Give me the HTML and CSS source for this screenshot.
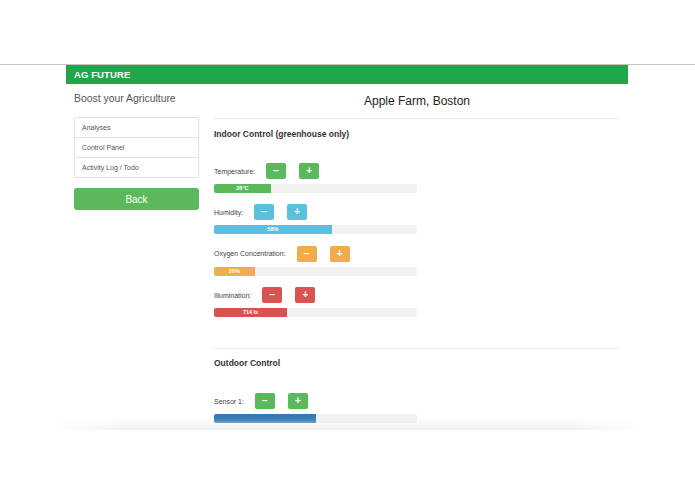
FILE: index.html
```html
<!DOCTYPE html>
<html lang="en">
<head>
    <meta charset="UTF-8">
    <meta name="viewport" content="width=device-width, initial-scale=1.0">
    <title>AG Future - Control Panel</title>
    <link rel="stylesheet" href="styles.css">
</head>
<body>
    <div class="screen">
        <div class="page">
            <div class="navbar">AG FUTURE</div>
            <div class="layout">
                <aside class="sidebar">
                    <p class="tagline">Boost your Agriculture</p>
                    <ul class="list-group">
                        <li>Analyses</li>
                        <li>Control Panel</li>
                        <li>Activity Log / Todo</li>
                    </ul>
                    <button class="back">Back</button>
                </aside>
                <main class="main">
                    <h1>Apple Farm, Boston</h1>

                    <section class="panel">
                        <h2>Indoor Control (greenhouse only)</h2>

                        <div class="control">
                            <div class="control-row">
                                <span class="label">Temperature:</span>
                                <button class="btn success">&minus;</button>
                                <button class="btn success">+</button>
                            </div>
                            <div class="progress"><div class="bar success" style="width: 28%">28°C</div></div>
                        </div>

                        <div class="control">
                            <div class="control-row">
                                <span class="label">Humidity:</span>
                                <button class="btn info">&minus;</button>
                                <button class="btn info">+</button>
                            </div>
                            <div class="progress"><div class="bar info" style="width: 58%">58%</div></div>
                        </div>

                        <div class="control">
                            <div class="control-row">
                                <span class="label">Oxygen Concentration:</span>
                                <button class="btn warning">&minus;</button>
                                <button class="btn warning">+</button>
                            </div>
                            <div class="progress"><div class="bar warning" style="width: 20%">20%</div></div>
                        </div>

                        <div class="control">
                            <div class="control-row">
                                <span class="label">Illumination:</span>
                                <button class="btn danger">&minus;</button>
                                <button class="btn danger">+</button>
                            </div>
                            <div class="progress"><div class="bar danger" style="width: 36%">714 lx</div></div>
                        </div>
                    </section>

                    <section class="panel outdoor">
                        <h2>Outdoor Control</h2>

                        <div class="control">
                            <div class="control-row">
                                <span class="label">Sensor 1:</span>
                                <button class="btn success">&minus;</button>
                                <button class="btn success">+</button>
                            </div>
                            <div class="progress"><div class="bar primary" style="width: 50%"></div></div>
                        </div>
                    </section>
                </main>
            </div>
        </div>
        <div class="fade"></div>
    </div>
</body>
</html>
```

FILE: styles.css
```css
/* General Styles */
body {
    margin: 0;
    padding: 0;
    background: #fff;
    font-family: 'Liberation Sans', Arial, sans-serif;
    color: #333;
}
.screen {
    position: relative;
    margin-top: 64px;
    height: 365px;
    border-top: 1px solid #c4c4c4;
    overflow: hidden;
}
.fade {
    position: absolute;
    left: 50px;
    right: 50px;
    bottom: 0;
    height: 12px;
    background: linear-gradient(to bottom, rgba(240, 240, 240, 0), rgba(236, 236, 236, 0.75));
    -webkit-mask-image: linear-gradient(to right, transparent, #000 12%, #000 88%, transparent);
}
.page {
    width: 562px;
    margin-left: 66px;
}

/* Header */
.navbar {
    height: 19px;
    line-height: 19px;
    padding-left: 8px;
    background: #21a64b;
    color: #fff;
    font-size: 9.5px;
    font-weight: bold;
    letter-spacing: 0.1px;
}
.layout {
    display: flex;
    padding: 0 8px;
}

/* Sidebar */
.sidebar {
    width: 125px;
}
.tagline {
    margin: 7px 0 0;
    height: 16px;
    line-height: 16px;
    font-size: 10.4px;
    color: #555;
}
.list-group {
    list-style: none;
    margin: 10px 0 0;
    padding: 0;
    border: 1px solid #e3e3e3;
    border-radius: 2px;
}
.list-group li {
    height: 19px;
    line-height: 19px;
    padding-left: 7px;
    font-size: 7px;
    color: #555;
    border-top: 1px solid #e3e3e3;
}
.list-group li:first-child {
    border-top: none;
}
.back {
    display: block;
    width: 125px;
    height: 22px;
    margin-top: 10px;
    border: none;
    border-radius: 3px;
    background: #5cb85c;
    color: #fff;
    font-family: inherit;
    font-size: 10px;
}

/* Main */
.main {
    width: 406px;
    margin-left: 15px;
}
.main h1 {
    margin: 0;
    padding-top: 9px;
    height: 25px;
    line-height: 16px;
    font-size: 12px;
    font-weight: normal;
    text-align: center;
    color: #222;
}
.panel {
    border-top: 1px solid #eee;
}
.panel h2 {
    margin: 0;
    padding-top: 9px;
    height: 35px;
    line-height: 13px;
    font-size: 8.5px;
    font-weight: bold;
    color: #333;
}
.outdoor {
    margin-top: 31px;
}
.outdoor h2 {
    padding-top: 8px;
    height: 36px;
}
.control {
    margin-bottom: 11.4px;
}
.control-row {
    display: flex;
    align-items: center;
    height: 16px;
}
.label {
    font-size: 7px;
    color: #444;
    margin-right: 11px;
}
.btn {
    width: 20px;
    height: 16px;
    padding: 0;
    margin-right: 13px;
    border: none;
    border-radius: 2px;
    color: #fff;
    font-family: inherit;
    font-size: 10px;
    font-weight: bold;
    line-height: 16px;
}
.progress {
    width: 203px;
    height: 9px;
    margin-top: 5px;
    background: #f2f2f2;
    border-radius: 2px;
    overflow: hidden;
}
.bar {
    height: 9px;
    line-height: 9px;
    font-size: 5.5px;
    font-weight: bold;
    color: #fff;
    text-align: center;
}
.success { background: #5cb85c; }
.info { background: #5bc0de; }
.warning { background: #f0ad4e; }
.danger { background: #d9534f; }
.primary { background: #337ab7; }
```
